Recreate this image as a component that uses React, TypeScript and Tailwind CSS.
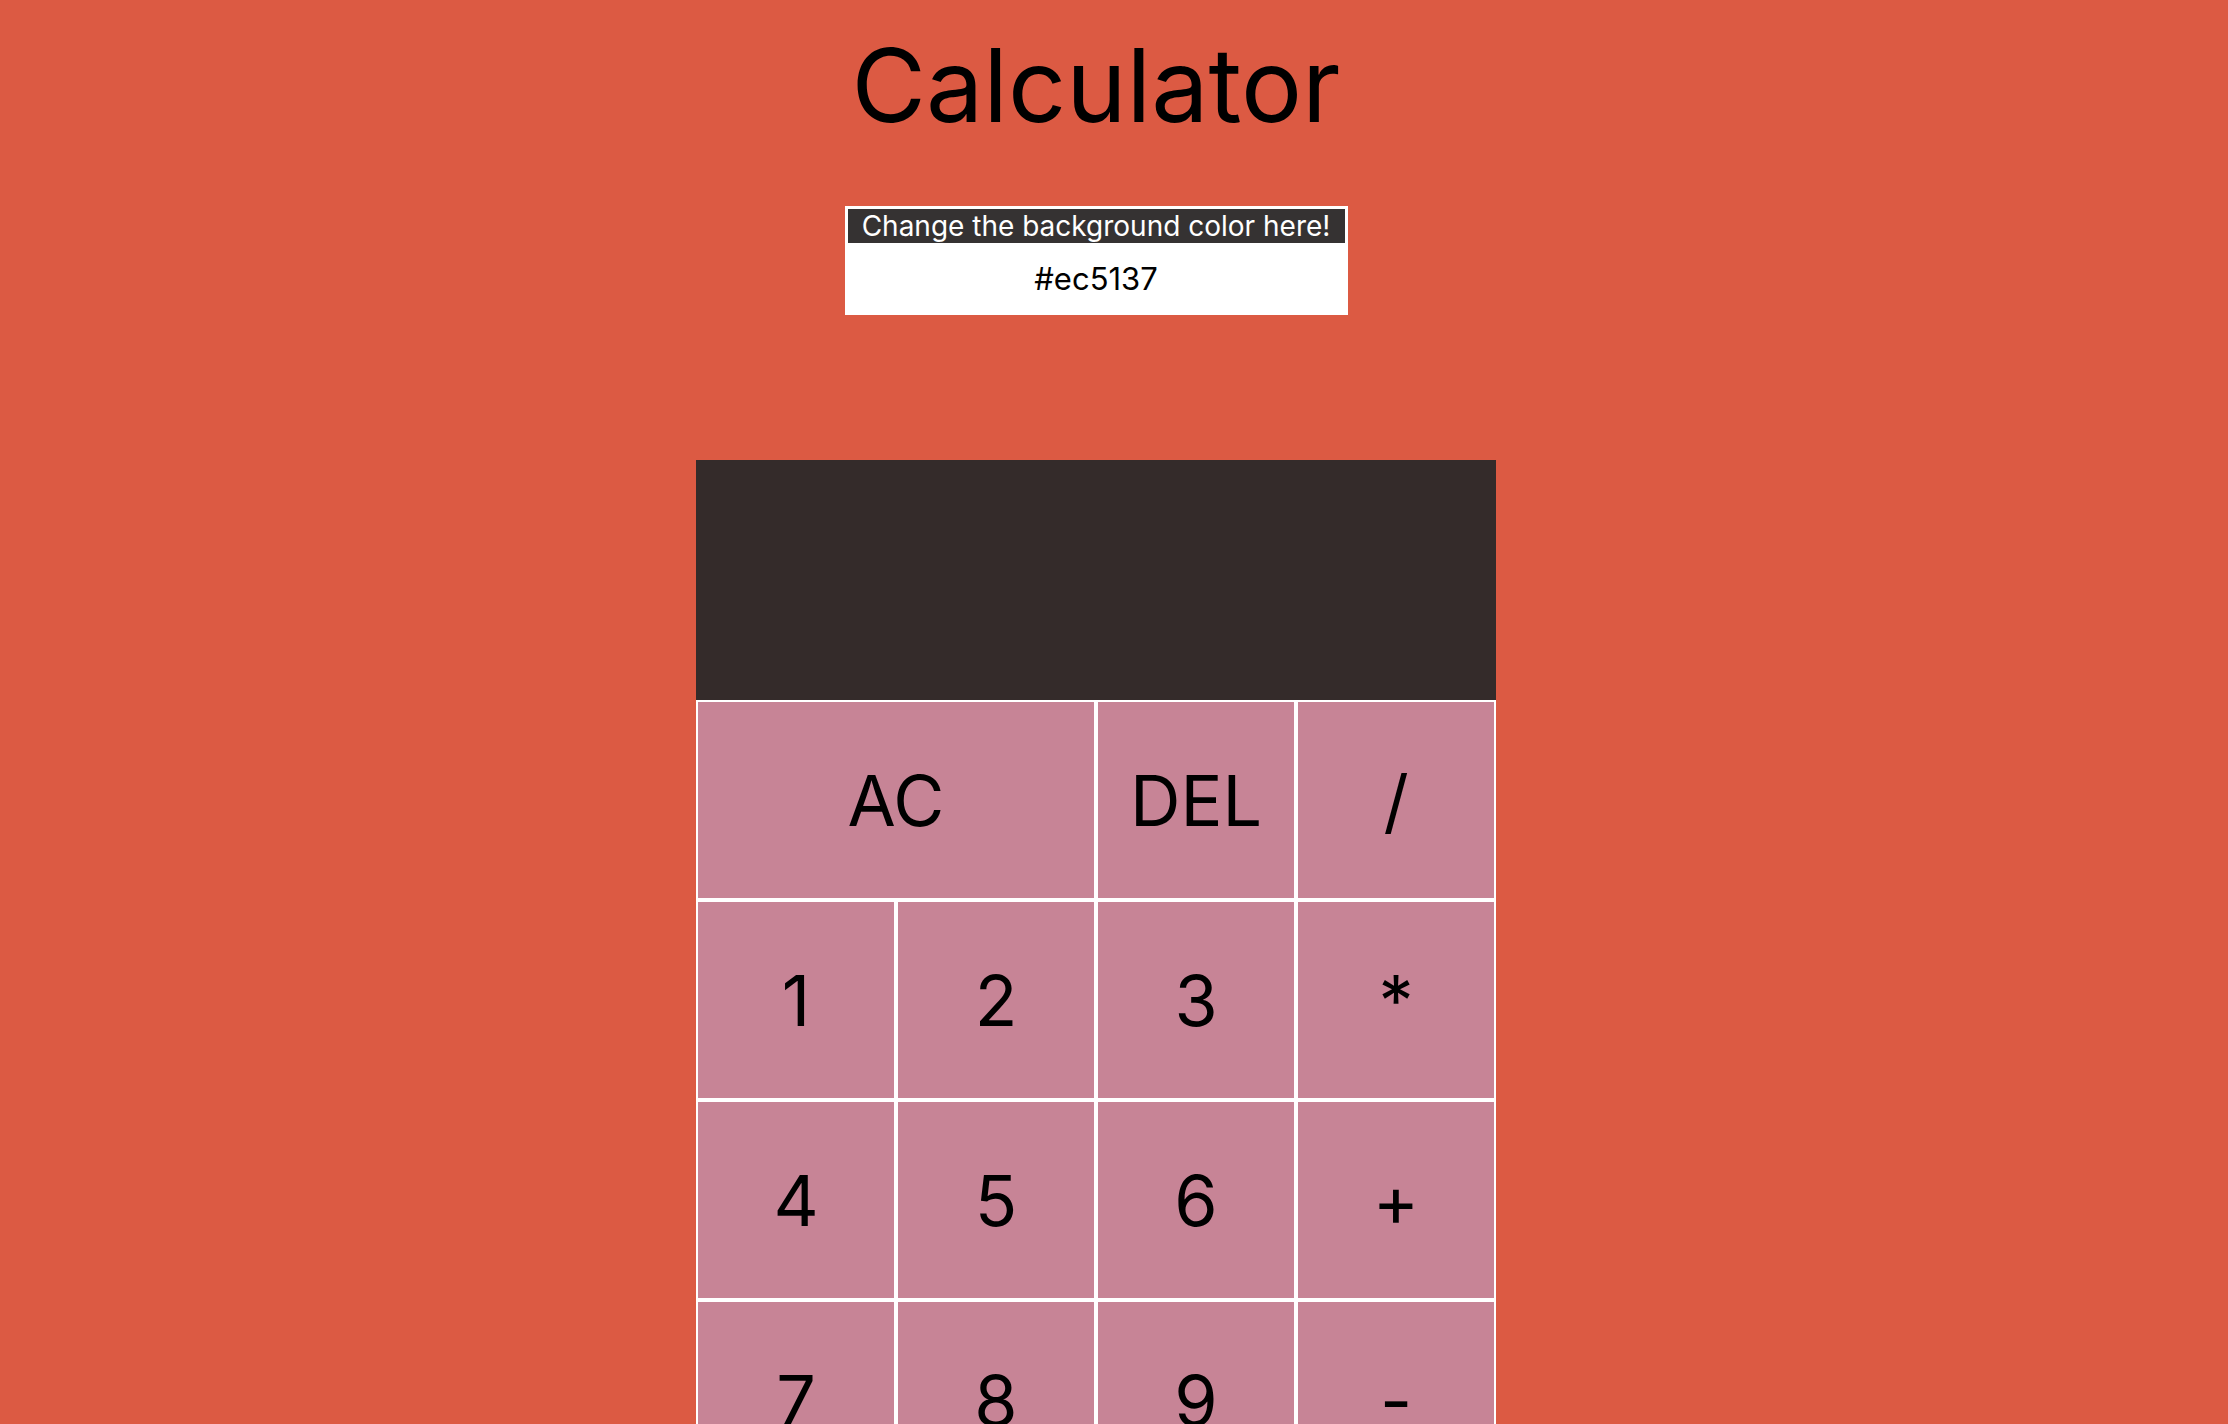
import { useState } from 'react';

const keys: { label: string; wide?: boolean }[] = [
  { label: 'AC', wide: true },
  { label: 'DEL' },
  { label: '/' },
  { label: '1' },
  { label: '2' },
  { label: '3' },
  { label: '*' },
  { label: '4' },
  { label: '5' },
  { label: '6' },
  { label: '+' },
  { label: '7' },
  { label: '8' },
  { label: '9' },
  { label: '-' },
  { label: '.' },
  { label: '0' },
  { label: '=', wide: true },
];

export default function App() {
  const [color, setColor] = useState('#ec5137');
  const [display, setDisplay] = useState('');

  const press = (k: string) => {
    if (k === 'AC') return setDisplay('');
    if (k === 'DEL') return setDisplay(display.slice(0, -1));
    if (k === '=') {
      try {
        // eslint-disable-next-line no-new-func
        setDisplay(String(Function(`return (${display})`)()));
      } catch {
        setDisplay('');
      }
      return;
    }
    setDisplay(display + k);
  };

  return (
    <div
      className="min-h-screen bg-[#dc5a43] flex flex-col items-center pr-[36px] text-black"
      style={{ fontFamily: 'Inter, "Noto Sans", sans-serif' }}
    >
      <h1 className="mt-[25px] text-[102px] leading-[120px] font-normal">Calculator</h1>

      <div className="mt-[61px] w-[503px] h-[109px] bg-white px-[3px] pt-[3px] flex flex-col">
        <label
          htmlFor="bg"
          className="h-[34px] bg-[#353232] text-white text-[28px] flex items-center justify-center"
        >
          Change the background color here!
        </label>
        <input
          id="bg"
          value={color}
          onChange={(e) => setColor(e.target.value)}
          className="flex-1 text-center text-[31px] outline-none bg-white"
        />
      </div>

      <div className="mt-[145px] w-[800px]">
        <div className="h-[240px] bg-[#342b2a] text-white text-[64px] flex items-end justify-end px-6 pb-4">
          {display}
        </div>
        <div className="grid grid-cols-4">
          {keys.map((k) => (
            <button
              key={k.label}
              onClick={() => press(k.label)}
              className={
                'h-[200px] border-2 border-white bg-[#c78496] text-[70px] flex items-center justify-center ' +
                (k.wide ? 'col-span-2' : '')
              }
            >
              {k.label}
            </button>
          ))}
        </div>
      </div>
    </div>
  );
}
